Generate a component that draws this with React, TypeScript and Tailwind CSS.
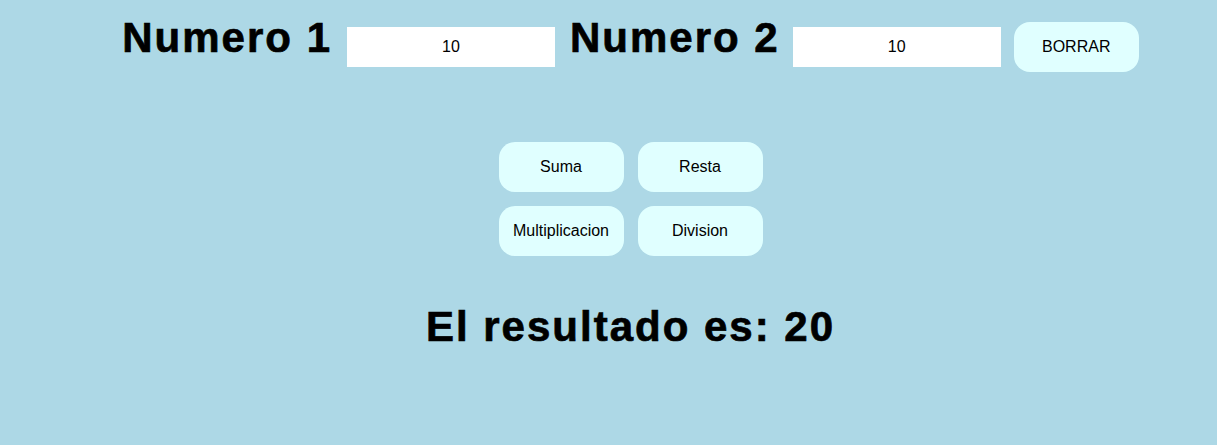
import { useState } from "react";

const font = { fontFamily: '"Liberation Sans", Arial, sans-serif' };

function OpButton({ label, onClick }: { label: string; onClick: () => void }) {
  return (
    <button
      onClick={onClick}
      className="w-[125px] h-[50px] rounded-[16px] bg-[#e0ffff] text-[16px] text-black"
    >
      {label}
    </button>
  );
}

export default function App() {
  const [a, setA] = useState("10");
  const [b, setB] = useState("10");
  const [result, setResult] = useState<number | string>(20);

  const x = Number(a);
  const y = Number(b);

  return (
    <div className="min-h-[445px] bg-[#add8e6] pl-[44px] text-black" style={font}>
      <div className="flex items-baseline justify-center pt-[14px]">
        <h1 className="text-[42px] font-bold leading-[48px] tracking-[2px] [-webkit-text-stroke:0.7px_black]">
          Numero 1
        </h1>
        <input
          value={a}
          onChange={(e) => setA(e.target.value)}
          className="ml-[15px] w-[208px] h-[40px] bg-white text-center text-[16px] outline-none"
        />
        <h1 className="ml-[15px] text-[42px] font-bold leading-[48px] tracking-[2px] [-webkit-text-stroke:0.7px_black]">
          Numero 2
        </h1>
        <input
          value={b}
          onChange={(e) => setB(e.target.value)}
          className="ml-[13px] w-[208px] h-[40px] bg-white text-center text-[16px] outline-none"
        />
        <button
          onClick={() => {
            setA("");
            setB("");
            setResult("");
          }}
          className="ml-[13px] w-[125px] h-[50px] rounded-[16px] bg-[#e0ffff] text-[16px]"
        >
          BORRAR
        </button>
      </div>

      <div className="mt-[70px] flex justify-center">
        <div className="grid grid-cols-2 gap-[14px]">
          <OpButton label="Suma" onClick={() => setResult(x + y)} />
          <OpButton label="Resta" onClick={() => setResult(x - y)} />
          <OpButton label="Multiplicacion" onClick={() => setResult(x * y)} />
          <OpButton label="Division" onClick={() => setResult(x / y)} />
        </div>
      </div>

      <h2 className="mt-[47px] text-center text-[42px] font-bold leading-[48px] tracking-[2px] [-webkit-text-stroke:0.7px_black]">
        El resultado es: {result}
      </h2>
    </div>
  );
}
